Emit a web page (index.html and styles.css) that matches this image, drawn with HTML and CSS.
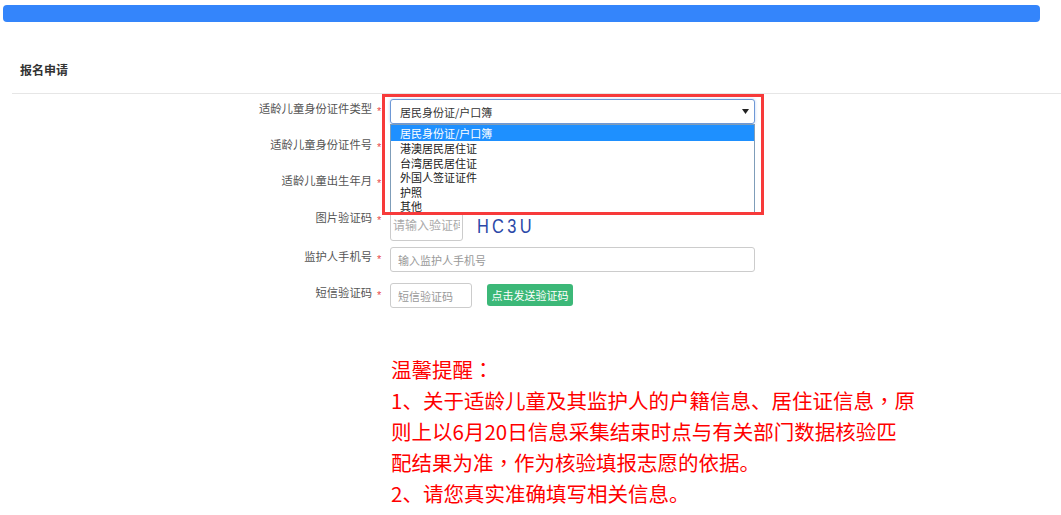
FILE: index.html
```html
<!DOCTYPE html>
<html lang="zh-CN">
<head>
<meta charset="utf-8">
<title>报名申请</title>
<link rel="stylesheet" href="styles.css">
</head>
<body>
<div class="topbar"></div>
<div class="panel-title">报名申请</div>
<div class="divider"></div>

<div class="form">
  <div class="row">
    <div class="label"><span>适龄儿童身份证件类型</span><i class="star">*</i></div>
    <div class="select">
      <span>居民身份证/户口簿</span>
      <svg class="caret" width="7" height="5" viewBox="0 0 7 5"><path d="M0 0H7L3.5 5Z" fill="#222"/></svg>
    </div>
  </div>
  <div class="row">
    <div class="label"><span>适龄儿童身份证件号</span><i class="star">*</i></div>
    <input class="input wide" type="text" placeholder="请输入证件号">
  </div>
  <div class="row">
    <div class="label"><span>适龄儿童出生年月</span><i class="star">*</i></div>
    <input class="input wide" type="text" placeholder="请选择出生年月">
  </div>
  <div class="row row-captcha">
    <div class="label"><span>图片验证码</span><i class="star">*</i></div>
    <input class="input captcha-input" type="text" placeholder="请输入验证码">
    <span class="captcha">HC3U</span>
  </div>
  <div class="row">
    <div class="label"><span>监护人手机号</span><i class="star">*</i></div>
    <input class="input wide" type="text" placeholder="输入监护人手机号">
  </div>
  <div class="row">
    <div class="label"><span>短信验证码</span><i class="star">*</i></div>
    <input class="input sms-input" type="text" placeholder="短信验证码">
    <button class="send-btn" type="button">点击发送验证码</button>
  </div>

  <ul class="dropdown">
    <li class="active">居民身份证/户口簿</li>
    <li>港澳居民居住证</li>
    <li>台湾居民居住证</li>
    <li>外国人签证证件</li>
    <li>护照</li>
    <li>其他</li>
  </ul>
  <div class="highlight-box"></div>
</div>

<div class="notice">
  温馨提醒<span class="punct" lang="zh-TW">：</span><br>
  1、关于适龄儿童及其监护人的户籍信息、居住证信息<span class="punct" lang="zh-TW">，</span>原<br>
  则上以6月20日信息采集结束时点与有关部门数据核验匹<br>
  配结果为准<span class="punct" lang="zh-TW">，</span>作为核验填报志愿的依据。<br>
  2、请您真实准确填写相关信息。
</div>
</body>
</html>
```

FILE: styles.css
```css
* {
  box-sizing: border-box;
}

html, body {
  margin: 0;
  padding: 0;
  background: #fff;
}

body {
  font-family: "Noto Sans CJK SC", "Noto Sans", "Liberation Sans", sans-serif;
  color: #333;
  width: 1061px;
  height: 515px;
  overflow: hidden;
}

.topbar {
  margin: 5px 21px 0 3px;
  height: 17px;
  background: #3485fb;
  border-radius: 4px;
}

.panel-title {
  margin-top: 38px;
  padding-left: 20px;
  height: 20px;
  line-height: 20px;
  font-size: 12px;
  font-weight: bold;
  color: #333;
}

.divider {
  margin: 13px 0 0 12px;
  height: 1px;
  background: #e6e6e6;
}

.form {
  position: relative;
  padding-top: 5px;
}

.row {
  display: flex;
  align-items: flex-start;
  height: 25px;
  margin-bottom: 11px;
}

.row-captcha {
  height: 34px;
  margin-bottom: 6px;
  align-items: center;
}

.label {
  flex: 0 0 382px;
  display: flex;
  justify-content: flex-end;
  align-items: flex-start;
  padding-top: 2px;
  line-height: 14px;
  font-size: 11.3px;
  color: #555;
  white-space: nowrap;
}

.row-captcha .label {
  align-self: flex-start;
  padding-top: 3px;
}

.star {
  font-style: normal;
  color: #e8484b;
  font-family: "Liberation Sans", sans-serif;
  font-size: 11px;
  line-height: 14px;
  margin-left: 5px;
  width: 5px;
  padding-top: 3px;
}

.select {
  margin-left: 8px;
  width: 365px;
  height: 25px;
  border: 1px solid #6e98d6;
  border-radius: 3px;
  box-shadow: 0 0 3px rgba(102, 150, 230, 0.45);
  display: flex;
  align-items: center;
  justify-content: space-between;
  padding: 0 5px 0 9px;
  font-size: 11px;
  color: #333;
  background: #fff;
}

.caret {
  display: block;
}

.input {
  margin-left: 8px;
  height: 25px;
  border: 1px solid #ccc;
  border-radius: 3px;
  padding: 0 7px;
  font-family: inherit;
  font-size: 11px;
  color: #333;
  background: #fff;
  outline: none;
}

.input::placeholder {
  color: #999;
}

.wide {
  width: 365px;
}

.captcha-input {
  width: 73px;
  height: 34px;
  padding: 0 2px;
  font-size: 12px;
}

.captcha-input::placeholder {
  color: #aaa;
}

.captcha {
  display: inline-block;
  margin-left: 14px;
  font-family: "Liberation Sans", "DejaVu Sans", sans-serif;
  font-size: 20px;
  letter-spacing: 4px;
  color: #2b48a8;
  line-height: 20px;
  padding-top: 3px;
  transform: scaleX(0.82);
  transform-origin: left center;
}

.sms-input {
  width: 82px;
}

.send-btn {
  margin: 1px 0 0 15px;
  width: 86px;
  height: 22px;
  border: none;
  border-radius: 3px;
  background: #3cb878;
  color: #fff;
  font-family: inherit;
  font-size: 11px;
  padding: 0;
}

.dropdown {
  position: absolute;
  left: 390px;
  top: 30px;
  width: 365px;
  height: 89px;
  margin: 0;
  padding: 0;
  list-style: none;
  border: 1px solid #7f9db9;
  background: #fff;
  font-size: 11px;
  color: #222;
}

.dropdown li {
  height: 14.5px;
  line-height: 14.5px;
  padding-left: 9px;
  white-space: nowrap;
}

.dropdown li.active {
  background: #1e90ff;
  color: #fff;
  height: 16px;
  line-height: 16px;
}

.highlight-box {
  position: absolute;
  left: 382px;
  top: 0;
  width: 382px;
  height: 121px;
  border: 3px solid #f73a3a;
}

.notice {
  margin: 46px 0 0 391px;
  font-size: 20.5px;
  line-height: 31px;
  color: #f00;
  white-space: nowrap;
}

.punct {
  font-family: "Noto Sans CJK TC", "Noto Sans CJK SC", sans-serif;
}
```
